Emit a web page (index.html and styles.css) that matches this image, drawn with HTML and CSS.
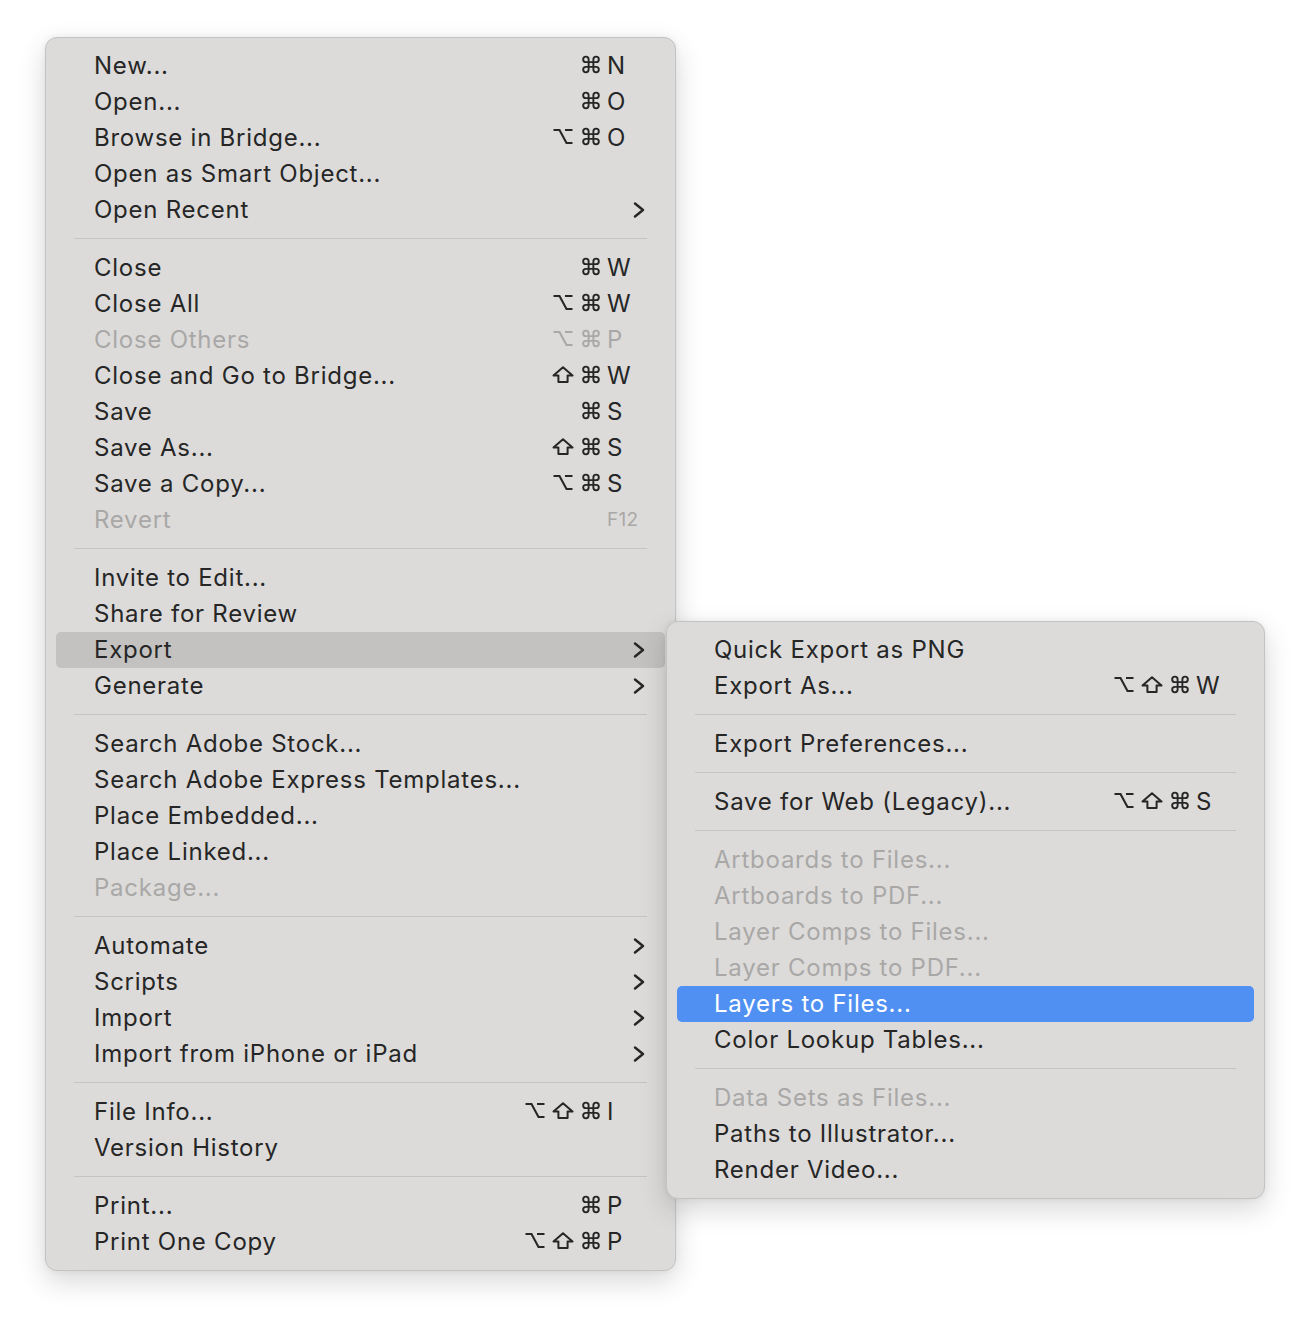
FILE: index.html
```html
<!DOCTYPE html>
<html lang="en">
<head>
<meta charset="utf-8">
<title>File menu</title>
<link rel="stylesheet" href="styles.css">
</head>
<body>
<svg class="defs" width="0" height="0" aria-hidden="true">
  <defs>
    <symbol id="cmd" viewBox="0 0 16 16">
      <path d="M6 6 V3.7 A2.3 2.3 0 1 0 3.7 6 H12.3 A2.3 2.3 0 1 0 10 3.7 V12.3 A2.3 2.3 0 1 0 12.3 10 H3.7 A2.3 2.3 0 1 0 6 12.3 Z" fill="none" stroke="currentColor" stroke-width="1.6" stroke-linejoin="round"/>
    </symbol>
    <symbol id="opt" viewBox="0 0 20 17">
      <path d="M0.5 2 H6.5 L13.5 15 H19.5 M12 2 H19.5" fill="none" stroke="currentColor" stroke-width="2.1" stroke-linejoin="miter"/>
    </symbol>
    <symbol id="shift" viewBox="0 0 22 17">
      <path d="M11 1.3 L20.5 9.6 H15.6 V15.9 H6.4 V9.6 H1.5 Z" fill="none" stroke="currentColor" stroke-width="2" stroke-linejoin="round"/>
    </symbol>
    <symbol id="chev" viewBox="0 0 12 16">
      <path d="M2 1.5 L10 8 L2 14.5" fill="none" stroke="currentColor" stroke-width="2.4" stroke-linecap="round" stroke-linejoin="round"/>
    </symbol>
  </defs>
</svg>

<div class="page">
  <div class="menu main-menu">
    <div class="group">
      <div class="item"><span class="label">New...</span><span class="mods"><span class="mod"><svg class="i-cmd"><use href="#cmd"/></svg></span></span><span class="key">N</span></div>
      <div class="item"><span class="label">Open...</span><span class="mods"><span class="mod"><svg class="i-cmd"><use href="#cmd"/></svg></span></span><span class="key">O</span></div>
      <div class="item"><span class="label">Browse in Bridge...</span><span class="mods"><span class="mod"><svg class="i-opt"><use href="#opt"/></svg></span><span class="mod"><svg class="i-cmd"><use href="#cmd"/></svg></span></span><span class="key">O</span></div>
      <div class="item"><span class="label">Open as Smart Object...</span><span class="key"></span></div>
      <div class="item"><span class="label">Open Recent</span><span class="key sub"><svg class="i-chev"><use href="#chev"/></svg></span></div>
    </div>
    <div class="sep"></div>
    <div class="group">
      <div class="item"><span class="label">Close</span><span class="mods"><span class="mod"><svg class="i-cmd"><use href="#cmd"/></svg></span></span><span class="key">W</span></div>
      <div class="item"><span class="label">Close All</span><span class="mods"><span class="mod"><svg class="i-opt"><use href="#opt"/></svg></span><span class="mod"><svg class="i-cmd"><use href="#cmd"/></svg></span></span><span class="key">W</span></div>
      <div class="item disabled"><span class="label">Close Others</span><span class="mods"><span class="mod"><svg class="i-opt"><use href="#opt"/></svg></span><span class="mod"><svg class="i-cmd"><use href="#cmd"/></svg></span></span><span class="key">P</span></div>
      <div class="item"><span class="label">Close and Go to Bridge...</span><span class="mods"><span class="mod"><svg class="i-shift"><use href="#shift"/></svg></span><span class="mod"><svg class="i-cmd"><use href="#cmd"/></svg></span></span><span class="key">W</span></div>
      <div class="item"><span class="label">Save</span><span class="mods"><span class="mod"><svg class="i-cmd"><use href="#cmd"/></svg></span></span><span class="key">S</span></div>
      <div class="item"><span class="label">Save As...</span><span class="mods"><span class="mod"><svg class="i-shift"><use href="#shift"/></svg></span><span class="mod"><svg class="i-cmd"><use href="#cmd"/></svg></span></span><span class="key">S</span></div>
      <div class="item"><span class="label">Save a Copy...</span><span class="mods"><span class="mod"><svg class="i-opt"><use href="#opt"/></svg></span><span class="mod"><svg class="i-cmd"><use href="#cmd"/></svg></span></span><span class="key">S</span></div>
      <div class="item disabled"><span class="label">Revert</span><span class="key fn">F12</span></div>
    </div>
    <div class="sep"></div>
    <div class="group">
      <div class="item"><span class="label">Invite to Edit...</span><span class="key"></span></div>
      <div class="item"><span class="label">Share for Review</span><span class="key"></span></div>
      <div class="item open"><span class="label">Export</span><span class="key sub"><svg class="i-chev"><use href="#chev"/></svg></span></div>
      <div class="item"><span class="label">Generate</span><span class="key sub"><svg class="i-chev"><use href="#chev"/></svg></span></div>
    </div>
    <div class="sep"></div>
    <div class="group">
      <div class="item"><span class="label">Search Adobe Stock...</span><span class="key"></span></div>
      <div class="item"><span class="label">Search Adobe Express Templates...</span><span class="key"></span></div>
      <div class="item"><span class="label">Place Embedded...</span><span class="key"></span></div>
      <div class="item"><span class="label">Place Linked...</span><span class="key"></span></div>
      <div class="item disabled"><span class="label">Package...</span><span class="key"></span></div>
    </div>
    <div class="sep"></div>
    <div class="group">
      <div class="item"><span class="label">Automate</span><span class="key sub"><svg class="i-chev"><use href="#chev"/></svg></span></div>
      <div class="item"><span class="label">Scripts</span><span class="key sub"><svg class="i-chev"><use href="#chev"/></svg></span></div>
      <div class="item"><span class="label">Import</span><span class="key sub"><svg class="i-chev"><use href="#chev"/></svg></span></div>
      <div class="item"><span class="label">Import from iPhone or iPad</span><span class="key sub"><svg class="i-chev"><use href="#chev"/></svg></span></div>
    </div>
    <div class="sep"></div>
    <div class="group">
      <div class="item"><span class="label">File Info...</span><span class="mods"><span class="mod"><svg class="i-opt"><use href="#opt"/></svg></span><span class="mod"><svg class="i-shift"><use href="#shift"/></svg></span><span class="mod"><svg class="i-cmd"><use href="#cmd"/></svg></span></span><span class="key">I</span></div>
      <div class="item"><span class="label">Version History</span><span class="key"></span></div>
    </div>
    <div class="sep"></div>
    <div class="group">
      <div class="item"><span class="label">Print...</span><span class="mods"><span class="mod"><svg class="i-cmd"><use href="#cmd"/></svg></span></span><span class="key">P</span></div>
      <div class="item"><span class="label">Print One Copy</span><span class="mods"><span class="mod"><svg class="i-opt"><use href="#opt"/></svg></span><span class="mod"><svg class="i-shift"><use href="#shift"/></svg></span><span class="mod"><svg class="i-cmd"><use href="#cmd"/></svg></span></span><span class="key">P</span></div>
    </div>
  </div>

  <div class="menu submenu">
    <div class="group">
      <div class="item"><span class="label">Quick Export as PNG</span><span class="key"></span></div>
      <div class="item"><span class="label">Export As...</span><span class="mods"><span class="mod"><svg class="i-opt"><use href="#opt"/></svg></span><span class="mod"><svg class="i-shift"><use href="#shift"/></svg></span><span class="mod"><svg class="i-cmd"><use href="#cmd"/></svg></span></span><span class="key">W</span></div>
    </div>
    <div class="sep"></div>
    <div class="group">
      <div class="item"><span class="label">Export Preferences...</span><span class="key"></span></div>
    </div>
    <div class="sep"></div>
    <div class="group">
      <div class="item"><span class="label">Save for Web (Legacy)...</span><span class="mods"><span class="mod"><svg class="i-opt"><use href="#opt"/></svg></span><span class="mod"><svg class="i-shift"><use href="#shift"/></svg></span><span class="mod"><svg class="i-cmd"><use href="#cmd"/></svg></span></span><span class="key">S</span></div>
    </div>
    <div class="sep"></div>
    <div class="group">
      <div class="item disabled"><span class="label">Artboards to Files...</span><span class="key"></span></div>
      <div class="item disabled"><span class="label">Artboards to PDF...</span><span class="key"></span></div>
      <div class="item disabled"><span class="label">Layer Comps to Files...</span><span class="key"></span></div>
      <div class="item disabled"><span class="label">Layer Comps to PDF...</span><span class="key"></span></div>
      <div class="item selected"><span class="label">Layers to Files...</span><span class="key"></span></div>
      <div class="item"><span class="label">Color Lookup Tables...</span><span class="key"></span></div>
    </div>
    <div class="sep"></div>
    <div class="group">
      <div class="item disabled"><span class="label">Data Sets as Files...</span><span class="key"></span></div>
      <div class="item"><span class="label">Paths to Illustrator...</span><span class="key"></span></div>
      <div class="item"><span class="label">Render Video...</span><span class="key"></span></div>
    </div>
  </div>
</div>
</body>
</html>
```

FILE: styles.css
```css
html, body {
  margin: 0;
  padding: 0;
  background: #ffffff;
}

body {
  font-family: "Inter", "Liberation Sans", sans-serif;
  font-size: 24px;
  letter-spacing: 0.75px;
  color: #262626;
}

.defs {
  position: absolute;
  width: 0;
  height: 0;
  overflow: hidden;
}

.page {
  position: relative;
  padding: 37px 0 0 45px;
  min-height: 1287px;
}

.menu {
  box-sizing: border-box;
  background: #dcdbda;
  border: 1px solid #c3c3c3;
  border-radius: 12px;
  padding: 10px;
  box-shadow: 0 10px 28px rgba(0, 0, 0, 0.16), 0 0 6px rgba(0, 0, 0, 0.06);
}

.main-menu {
  width: 631px;
}

.submenu {
  position: absolute;
  left: 666px;
  top: 621px;
  width: 599px;
}

.item {
  box-sizing: border-box;
  display: flex;
  align-items: center;
  height: 36px;
  padding: 0 20px 2px 38px;
  border-radius: 5px;
  white-space: nowrap;
}

.submenu .item {
  padding-left: 37px;
}

.label {
  flex: 1;
}

.mods {
  display: flex;
  align-items: center;
  margin-right: 2px;
  margin-bottom: 2px;
}

.mod {
  display: flex;
  justify-content: center;
  width: 28px;
}

.key {
  width: 38px;
  display: flex;
  align-items: center;
  letter-spacing: 0;
}

.key.sub {
  justify-content: flex-end;
  margin-top: 2px;
}

.key.fn {
  font-size: 19px;
  letter-spacing: 0.3px;
}

.i-cmd {
  width: 20px;
  height: 19px;
}

.i-opt {
  width: 20px;
  height: 17px;
}

.i-shift {
  width: 22px;
  height: 17px;
}

.i-chev {
  width: 12px;
  height: 16px;
}

.sep {
  height: 1px;
  margin: 10px 18px 11px 18px;
  background: #c5c4c3;
}

.disabled {
  color: #a9a8a7;
}

.open {
  background: #c3c2c1;
}

.selected {
  background: #5090f2;
  color: #ffffff;
}
```
